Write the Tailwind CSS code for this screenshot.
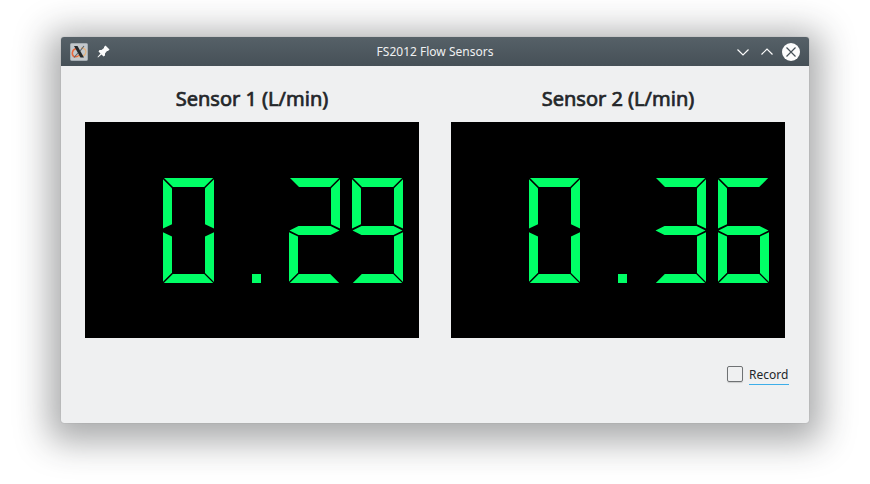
<!DOCTYPE html>
<html lang="en">
<head>
<meta charset="utf-8">
<title>FS2012 Flow Sensors</title>
<script src="https://cdn.jsdelivr.net/npm/@tailwindcss/browser@4"></script>
</head>
<body class="h-[484px] overflow-hidden bg-white pt-[37px] pl-[61px] font-['Noto_Sans','Open_Sans',sans-serif] text-xs text-[#232629]">
<svg class="hidden">
  <defs>
    <path id="a" d="M1 0H50.200L41.200 9H10Z"/>
    <path id="b" d="M51 1.200V50.5L42 46.3V10.200Z"/>
    <path id="c" d="M51 54.2V104L42 95V58.5Z"/>
    <path id="d" d="M.8 105H50.200L41.200 96H9.800Z"/>
    <path id="e" d="M0 54.2V103.800L9 94.800V58.5Z"/>
    <path id="f" d="M0 1.200V50.5L9 46.3V10.200Z"/>
    <path id="g" d="M.5 52.5L9.500 48H41.500L50.500 52.5L41.500 57H9.500Z"/>
  </defs>
</svg>
<main class="flex h-[386px] w-[748px] flex-col rounded-[3px] bg-[#eff0f1] shadow-[0_7px_34px_12px_rgba(35,38,41,0.39),0_0_1px_rgba(35,38,41,0.4)]">
  <header class="grid h-[29px] grid-cols-[1fr_auto_1fr] items-center rounded-t-[3px] bg-linear-to-b from-[#566168] to-[#465057] px-[9px] text-[#eff0f1]">
    <div class="flex items-center gap-[7px]">
      <svg class="size-[18px]" viewBox="0 0 18 18" fill="none">
        <rect x=".5" y=".5" width="17" height="17" rx="1" fill="#c3c8cc" stroke="#a4acb2"/>
        <path d="M6 5.500C1.500 7 1.500 12 4 13.500C6 14.300 8 13.500 9.500 12" stroke="#e9673c" stroke-width="1.500"/>
        <path d="M11 5C16 5 17 9 15 11.500C13.500 13.500 11 14 8 13.500" stroke="#e5b37e" stroke-width="1.300"/>
        <path d="M4 3H7.500L14 14.500H10.500Z" fill="#25292c"/>
        <path d="M14 3L10 8M8 10L4 14.500" stroke="#5b6166" stroke-width="1.100"/>
      </svg>
      <svg class="size-4" viewBox="0 0 16 16" fill="#fcfcfc">
        <path d="M10.500 1.500L14.500 5.500L13 7L12 7L10 9.500V11.500L8.500 12.500L6.500 10.500L3 13.500L2.500 13L5.500 9.500L3.500 7.500L4.500 6H6.500L9 4V3Z"/>
      </svg>
    </div>
    <h1>FS2012 Flow Sensors</h1>
    <div class="flex items-center justify-end gap-[7px]">
      <svg class="h-[18px] w-[17px]" viewBox="0 0 17 18" fill="none" stroke="#fcfcfc" stroke-width="1.200"><path d="M3.500 6.500L9 12L14.500 6.500"/></svg>
      <svg class="h-[18px] w-[17px]" viewBox="0 0 17 18" fill="none" stroke="#fcfcfc" stroke-width="1.200"><path d="M3.500 11.500L9 6L14.500 11.500"/></svg>
      <svg class="size-[18px]" viewBox="0 0 18 18"><circle cx="9" cy="9" r="9" fill="#fcfcfc"/><path d="M4.500 4.500L13.500 13.500M13.500 4.500L4.500 13.500" stroke="#465057" stroke-width="1.200"/></svg>
    </div>
  </header>
  <div class="flex gap-8 px-6 pt-[18px]">
    <section class="w-[334px]">
      <h2 class="h-[38px] text-center text-xl leading-[30px] [-webkit-text-stroke:0.7px_#232629]">Sensor 1 (L/min)</h2>
      <svg class="h-[216px] w-[334px] bg-black" viewBox="0 0 334 216" fill="#00ff66" role="img" aria-label="0.29">
        <g transform="translate(78 56)"><use href="#a"/><use href="#b"/><use href="#c"/><use href="#d"/><use href="#e"/><use href="#f"/></g>
        <rect x="167" y="152" width="9" height="9"/>
        <g transform="translate(204 56)"><use href="#a"/><use href="#b"/><use href="#g"/><use href="#e"/><use href="#d"/></g>
        <g transform="translate(267 56)"><use href="#a"/><use href="#b"/><use href="#c"/><use href="#d"/><use href="#f"/><use href="#g"/></g>
      </svg>
    </section>
    <section class="w-[334px]">
      <h2 class="h-[38px] text-center text-xl leading-[30px] [-webkit-text-stroke:0.7px_#232629]">Sensor 2 (L/min)</h2>
      <svg class="h-[216px] w-[334px] bg-black" viewBox="0 0 334 216" fill="#00ff66" role="img" aria-label="0.36">
        <g transform="translate(78 56)"><use href="#a"/><use href="#b"/><use href="#c"/><use href="#d"/><use href="#e"/><use href="#f"/></g>
        <rect x="167" y="152" width="9" height="9"/>
        <g transform="translate(204 56)"><use href="#a"/><use href="#b"/><use href="#g"/><use href="#c"/><use href="#d"/></g>
        <g transform="translate(267 56)"><use href="#a"/><use href="#f"/><use href="#e"/><use href="#d"/><use href="#c"/><use href="#g"/></g>
      </svg>
    </section>
  </div>
  <label class="mt-7 ml-[666px] flex items-start gap-1.5 self-start">
    <span class="size-4 rounded-[2px] border border-[#6f7274] shadow-[0_1px_1px_rgba(0,0,0,0.15)]"></span>
    <span class="h-[19px] w-10 border-b border-[#3daee9] leading-[17px]">Record</span>
  </label>
</main>
</body>
</html>
